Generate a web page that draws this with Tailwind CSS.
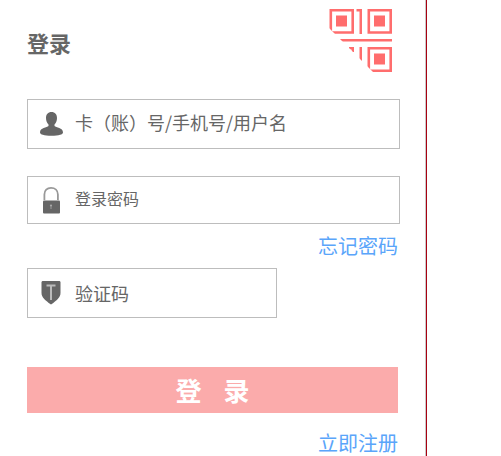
<!DOCTYPE html>
<html lang="zh-CN">

<head>
  <meta charset="utf-8">
  <meta name="viewport" content="width=device-width, initial-scale=1">
  <title>登录</title>
  <script src="https://cdn.jsdelivr.net/npm/@tailwindcss/browser@4"></script>
</head>

<body class="bg-white font-['Noto_Sans_CJK_SC',sans-serif] text-[#666]">
  <div class="mr-[74px] border-r border-[#a80010]">
    <div class="min-h-screen border-r border-[#c8c8c8] pl-[27px] pr-[25px] pt-[9px]">
      <!-- title and QR switch -->
      <div class="flex items-start justify-between pr-2">
        <h1 class="pt-[17px] text-[22px] leading-8 font-bold">登录</h1>
        <button type="button" aria-label="扫码登录">
          <svg class="block" width="63" height="63" viewBox="0 0 63 63" fill="#ff6d6d">
            <clipPath id="corner"><path d="M0 0H63V63H44L0 19Z"/></clipPath>
            <g clip-path="url(#corner)">
              <g fill="none" stroke="#ff6d6d" stroke-width="2.6">
                <path d="M1.8 1.3H23.7V23.5H1.8ZM39.8 1.3H61.7V23.5H39.8ZM39.8 39.3H61.7V61.7H39.8Z"/>
              </g>
              <path d="M7 6.5H18V17.5H7ZM45 6.5H56V17.5H45ZM45 44.5H56V55.5H45Z"/>
              <path d="M27.5 0H33V25H30.5V2.5H27.5ZM10 30H63V32.5H10ZM20 38H25V43H22.5V40.5H20ZM30.5 38H33V53H30.5Z"/>
            </g>
          </svg>
        </button>
      </div>

      <form class="pt-[27px]">
        <div class="flex h-[50px] items-center border border-[#bdbdbd] pl-[11px]">
          <label for="account" class="w-9 shrink-0" aria-label="用户名">
            <svg width="26" height="26" viewBox="0 0 26 26" fill="#666">
              <path d="M12.5 1C16 1 18 3.5 18 7C18 10 17 12 15.5 13.5V15C17 16.5 24 16.5 24 21.5C24 23.5 20 24.7 12.5 24.7S1 23.5 1 21.5C1 16.5 8 16.5 9.5 15V13.5C8 12 7 10 7 7C7 3.5 9 1 12.5 1Z"/>
            </svg>
          </label>
          <input id="account" type="text" placeholder="卡（账）号/手机号/用户名" class="h-11 w-full min-w-0 pb-1 text-[18px] outline-none placeholder:text-[#666]">
        </div>

        <div class="mt-[27px] flex h-12 items-center border border-[#bdbdbd] pl-[11px]">
          <label for="password" class="w-9 shrink-0" aria-label="登录密码">
            <svg width="26" height="28" viewBox="0 0 26 28">
              <path d="M5.4 14V8.5C5.4 4.5 8 1.8 12 1.8S18.9 4.5 18.9 8.5V14" fill="none" stroke="#999" stroke-width="1.8"/>
              <rect x="4" y="14.5" width="17" height="13" rx="1" fill="#666"/>
              <circle cx="12" cy="19.5" r="1.1" fill="#aaa"/>
              <path d="M11.5 20H12.5V23H11.5Z" fill="#999"/>
            </svg>
          </label>
          <input id="password" type="password" placeholder="登录密码" class="h-11 w-full min-w-0 pb-1 text-[16px] outline-none placeholder:text-[#666]">
        </div>

        <div class="pr-0.5 pt-[6px] text-right text-[20px] leading-8">
          <a href="#" class="text-[#5aa5fa]">忘记密码</a>
        </div>

        <div class="mt-[6px] flex h-[50px] w-[250px] items-center border border-[#bdbdbd] pl-[11px]">
          <label for="captcha" class="w-9 shrink-0" aria-label="验证码">
            <svg width="26" height="26" viewBox="0 0 26 26">
              <path d="M4 1H20C21 1 21.5 1.5 21.5 2.5V13C21.5 17 18.5 20 12 24.5C5.5 20 2.5 17 2.5 13V2.5C2.5 1.5 3 1 4 1Z" fill="#666"/>
              <path d="M7.5 5.5H16.5M12 5.5V20" fill="none" stroke="#bbb" stroke-width="2"/>
            </svg>
          </label>
          <input id="captcha" type="text" placeholder="验证码" class="h-11 w-full min-w-0 text-[18px] outline-none placeholder:text-[#666]">
        </div>

        <div class="pr-0.5 pt-[49px]">
          <button type="submit" class="flex h-[46px] w-full items-center justify-center gap-[22px] bg-[#fbabab] pb-0.5 text-[26px] font-bold text-white">
            <span>登</span>
            <span>录</span>
          </button>
        </div>

        <div class="pr-0.5 pt-4 text-right text-[20px] leading-7">
          <a href="#" class="text-[#5aa5fa]">立即注册</a>
        </div>
      </form>
    </div>
  </div>
</body>

</html>
